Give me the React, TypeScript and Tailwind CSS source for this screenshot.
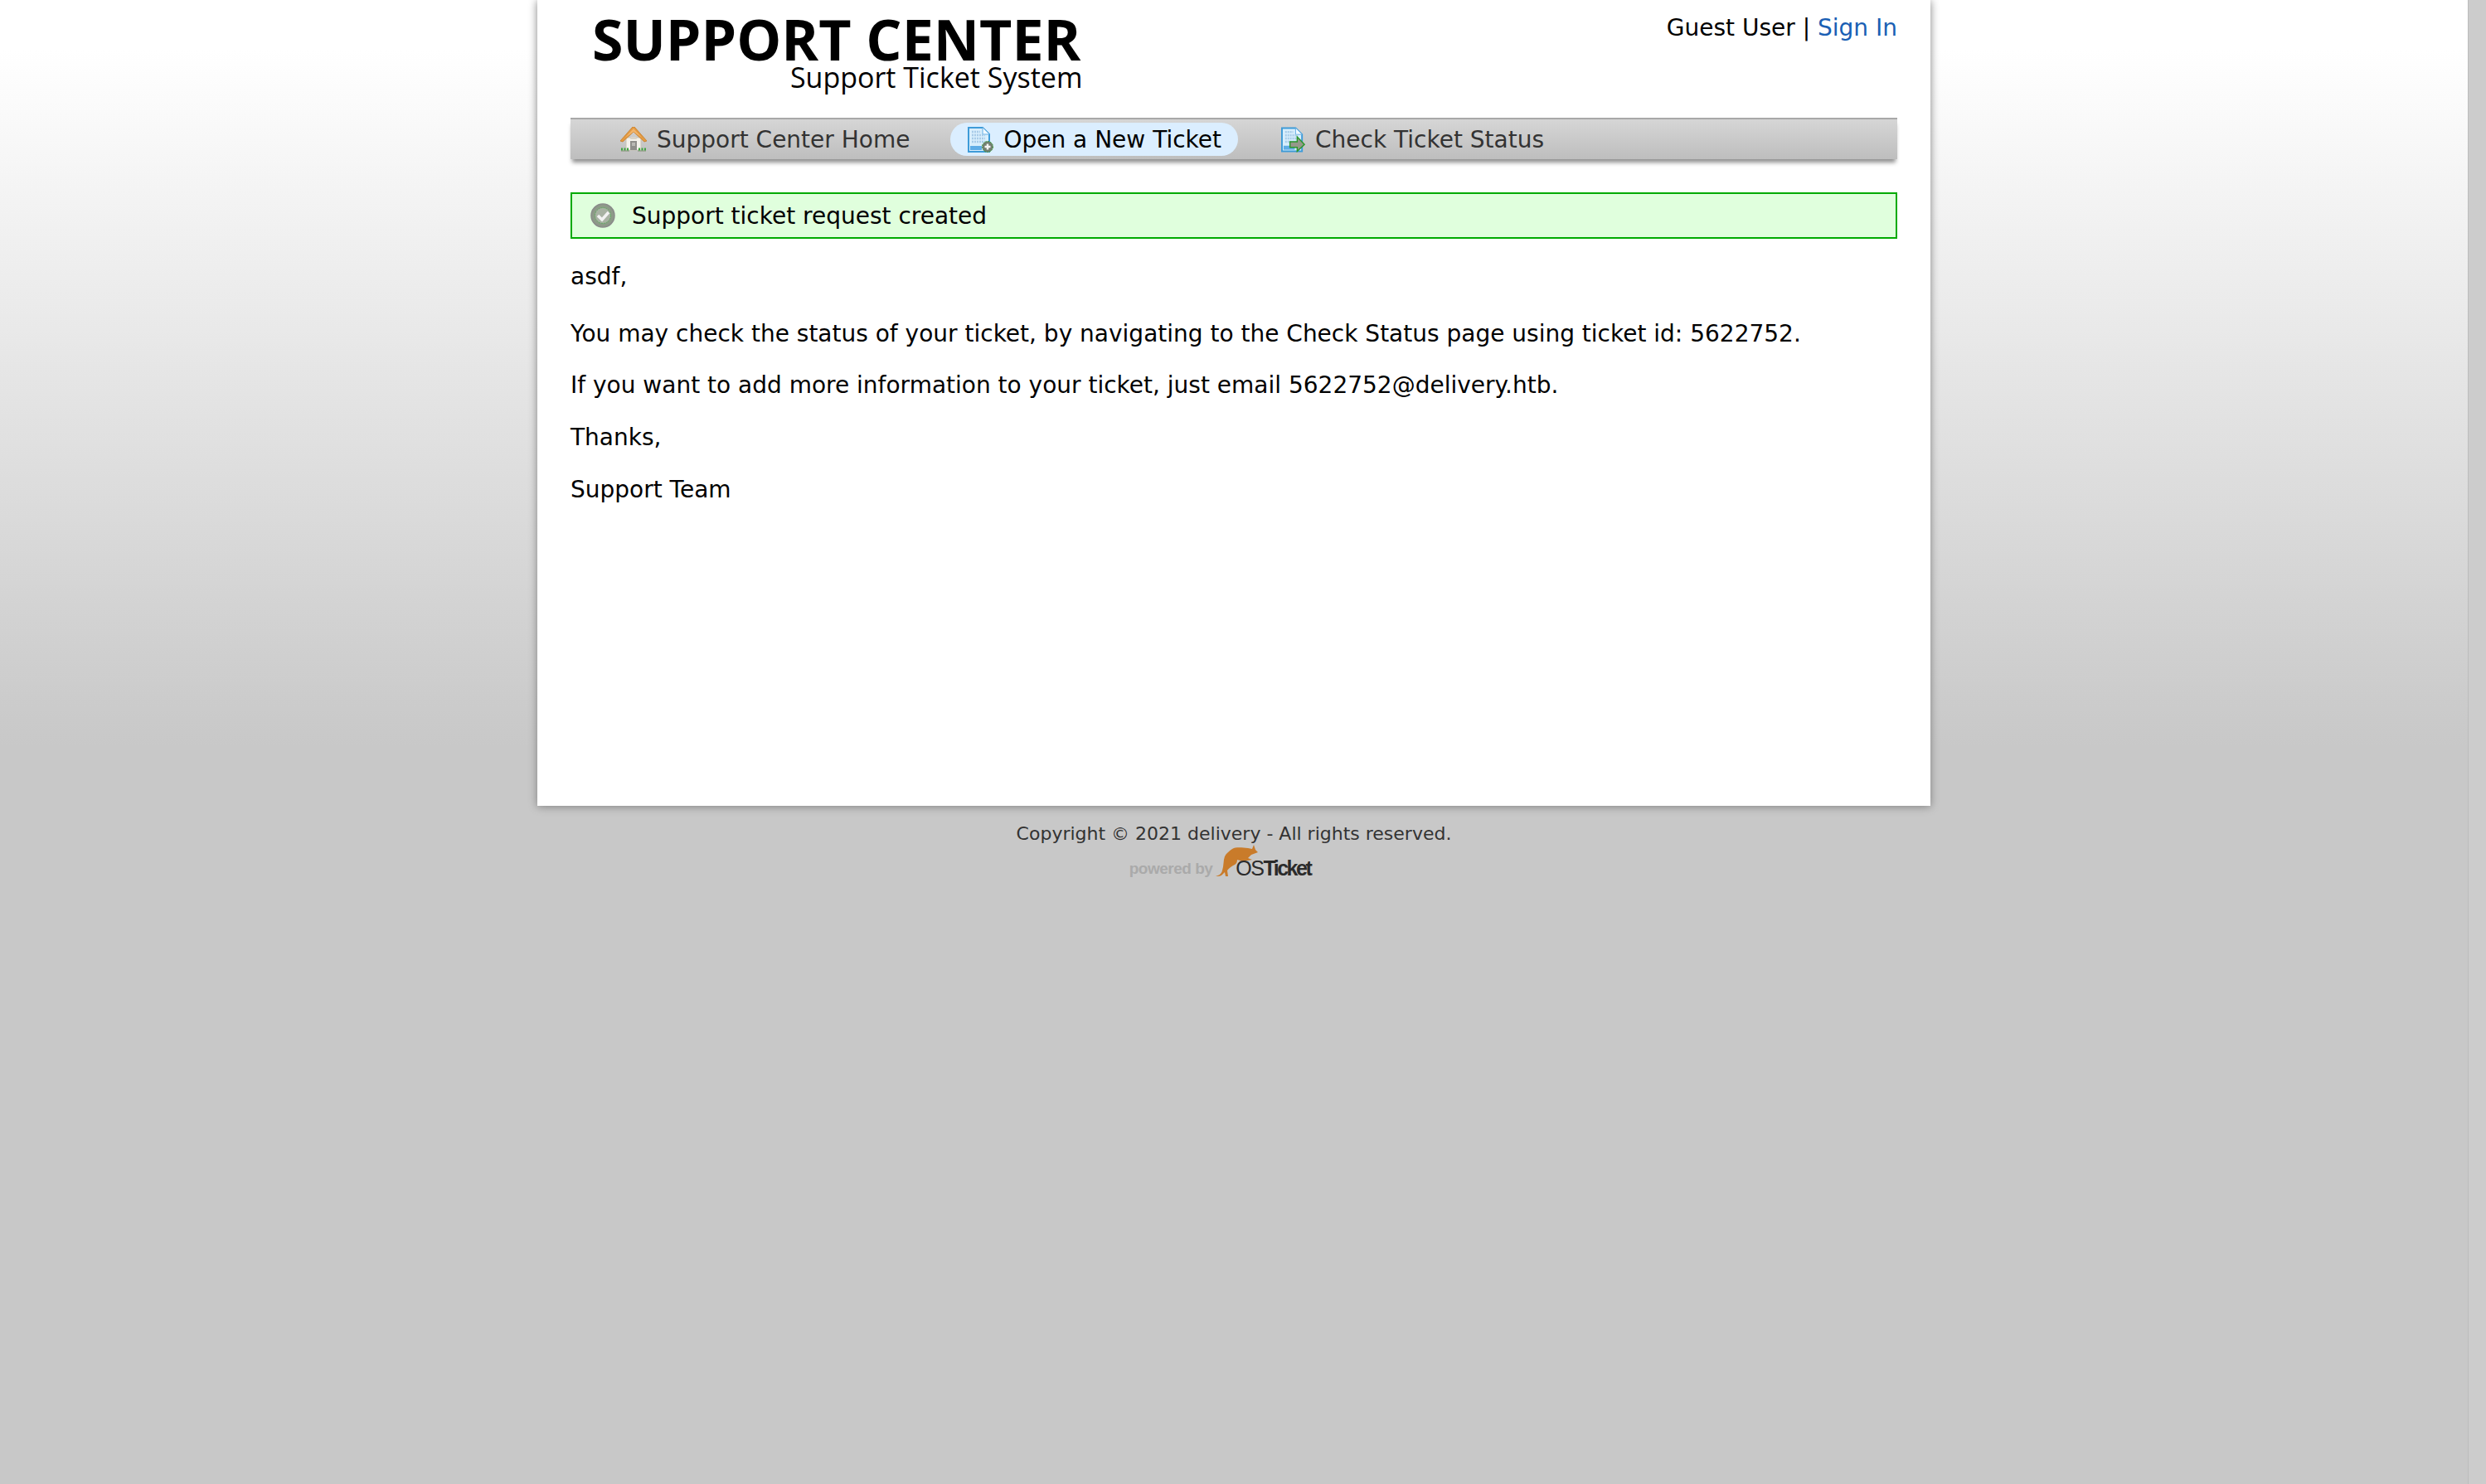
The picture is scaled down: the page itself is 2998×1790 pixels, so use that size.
import React from 'react';

const sans = 'font-["DejaVu_Sans",sans-serif]';
const arial = "font-['Liberation_Sans',sans-serif]";

const HomeIcon = () => (
  <svg width="32" height="30" viewBox="0 0 32 30" className="shrink-0">
    <path d="M7 13h18v15H7z" fill="#f4f2ec" stroke="#c9c4b6" />
    <path d="M0 17 15 0h2l15 17-3 1L16 6 3 18z" fill="#e39a42" stroke="#c77c26" strokeWidth="0.8" />
    <path d="M6 13 16 2l10 11-10-7z" fill="#f2b56c" />
    <path d="M13 12h6l1 3h-8z" fill="#d9d4c8" />
    <rect x="12" y="17" width="8" height="11" fill="#8f8f8b" />
    <rect x="14" y="19" width="4" height="4" fill="#b9b9b4" />
    <path d="M1 29h10M21 29h10" stroke="#a3a89b" strokeWidth="2" />
    <path d="M1 27h9M22 27h9" stroke="#3fa53f" strokeWidth="3" strokeDasharray="2 1.5" />
  </svg>
);

const DocIcon = ({ badge }: { badge: 'plus' | 'arrow' }) => (
  <svg width={badge === 'plus' ? 31 : 30} height="31" viewBox="0 0 31 31" className="shrink-0">
    <path d="M1 1h17l8 8v21H1z" fill="#d8eefc" stroke="#3e9bd8" strokeWidth="2" />
    <path d="M18 1v8h8" fill="#f1f9ff" stroke="#62aee6" />
    <path d="M5 6h10M5 10h16M5 14h16M5 18h16" stroke="#a8cbe8" strokeWidth="2.5" strokeDasharray="2 1" />
    <rect x="3" y="23" width="14" height="5" fill="#5fade6" />
    {badge === 'plus' ? (
      <>
        <circle cx="24" cy="24" r="6.5" fill="#727f70" stroke="#3f9a3f" strokeDasharray="2 1" />
        <path d="M24 20.5v7M20.5 24h7" stroke="#f4f4f4" strokeWidth="2.5" />
      </>
    ) : (
      <path d="M11 18h9v-6l9 9.5-9 8.5v-5h-9z" fill="#96988a" stroke="#2a962a" strokeWidth="1.5" />
    )}
  </svg>
);

const CheckIcon = () => (
  <svg width="30" height="30" viewBox="0 0 30 30" className="shrink-0">
    <circle cx="15" cy="15" r="14" fill="#8d9a88" stroke="#8a8a8a" strokeWidth="1.5" />
    <circle cx="15" cy="15" r="9.5" fill="#a8b2a3" stroke="#5fae5f" strokeDasharray="2 1" />
    <path d="m9 15 5 5 8-9" fill="none" stroke="#f2f2f2" strokeWidth="3.5" />
  </svg>
);

const Kangaroo = () => (
  <svg width="51" height="39" viewBox="0 0 51 39" className="shrink-0">
    <path
      d="M0 38C4 37 7 35 8 31 10 25 9 19 11 14 13 10 16 8 20 5 26 2 33 4 39 4L44 5 46 0 48 6 51 9 43 12 39 16 44 18 33 20 26 18C26 21 25 23 23 24 19 26 16 28 14 31L15 38H12L11 33 8 36C6 38 3 38 1 38Z"
      fill="#c97b2a"
    />
  </svg>
);

const App: React.FC = () => {
  return (
    <div className={`flex min-h-[1790px] ${sans}`}>
      <div className="flex-1 bg-[linear-gradient(#ffffff_60px,#c8c8c8_900px)] bg-no-repeat bg-[#c8c8c8]">
        <div className="w-[1680px] h-[972px] mx-auto bg-white px-10 shadow-[0_1px_10px_#808080]">
          {/* header */}
          <div className="h-[142px] flex justify-between">
            <div className="pl-[26px] w-fit font-['Open_Sans',sans-serif] text-black">
              <div className="text-[68px] font-bold leading-[56px] pt-[19px]">SUPPORT CENTER</div>
              <div className="text-[34px] leading-[34px] mt-px -mr-0.5 text-right">Support Ticket System</div>
            </div>
            <div className="text-[28px] leading-8 pt-[18px] text-black">
              Guest User | <span className="text-[#1a5fb4]">Sign In</span>
            </div>
          </div>

          {/* nav */}
          <div className="h-[50px] flex items-center pl-[60px] text-[28px] bg-[linear-gradient(#d6d6d6,#bebebe)] border-t-2 border-[#a8a8a8] shadow-[0_6px_5px_-2px_#909090] text-[#333333]">
            <div className="flex items-center gap-3"><HomeIcon /><span className="pt-0.5">Support Center Home</span></div>
            <div className="ml-[49px] h-10 pl-[21px] pr-5 rounded-[20px] bg-[#dbeeff] text-black flex items-center gap-3"><DocIcon badge="plus" /><span className="pt-0.5">Open a New Ticket</span></div>
            <div className="ml-[52px] flex items-center gap-[11px]"><DocIcon badge="arrow" /><span className="pt-0.5">Check Ticket Status</span></div>
          </div>

          {/* alert */}
          <div className="mt-10 h-[56px] border-2 border-[#00aa00] bg-[#e0ffdd] flex items-center pl-[22px] gap-5 text-[28px] text-black">
            <CheckIcon /><span className="pt-px">Support ticket request created</span>
          </div>

          {/* message */}
          <div className="text-[28px] leading-[40px] text-black">
            <p className="mt-[26px]">asdf,</p>
            <p className="mt-[29px]">You may check the status of your ticket, by navigating to the Check Status page using ticket id: 5622752.</p>
            <p className="mt-[22px]">If you want to add more information to your ticket, just email 5622752@delivery.htb.</p>
            <p className="mt-[23px]">Thanks,</p>
            <p className="mt-[23px]">Support Team</p>
          </div>
        </div>

        {/* footer */}
        <div className="text-center pt-[19px]">
          <p className="text-[22px] leading-[30px] text-[#333333]">Copyright © 2021 delivery - All rights reserved.</p>
          <div className="flex justify-center items-end h-[39px] -mt-0.5 mr-[34px]">
            <span className={`${arial} text-[19px] leading-[24px] font-bold tracking-[-0.5px] text-[#aaaaaa] mr-1 mb-[-2px]`}>powered by</span>
            <Kangaroo />
            <span className={`${arial} text-[25px] leading-[26px] -ml-[27px] mb-[-2px] text-[#2b2b2b]`}>
              <span className="tracking-[-1.5px]">OS</span>
              <b className="tracking-[-2.5px]">Ticket</b>
            </span>
          </div>
        </div>
      </div>
      {/* scrollbar */}
      <div className="w-[22px] bg-[#cccccc] border-l border-[#bcbcbc]" />
    </div>
  );
};

export default App;
